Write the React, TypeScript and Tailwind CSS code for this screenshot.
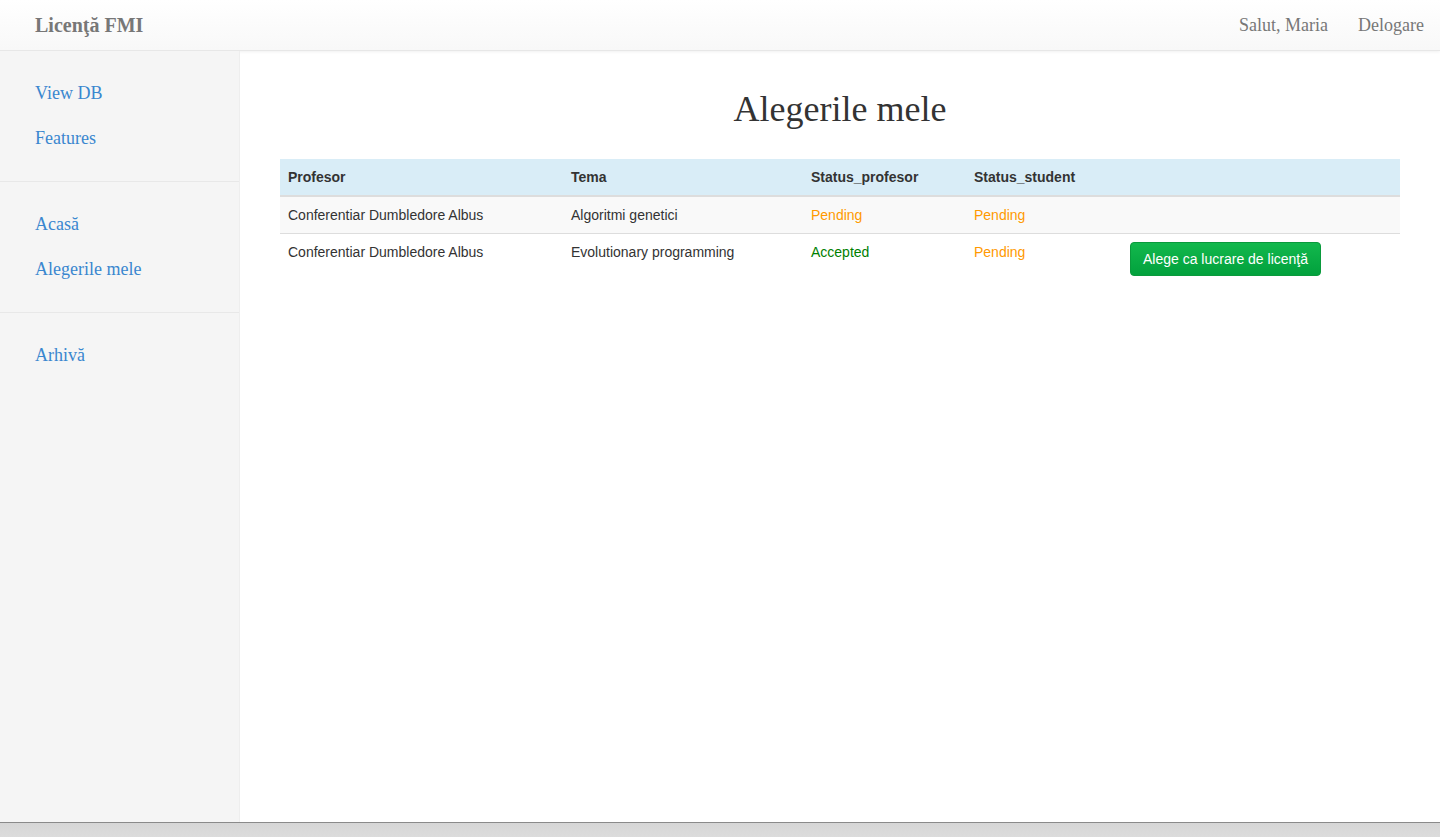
import React from "react";

type Row = {
  profesor: string;
  tema: string;
  statusProfesor: "Pending" | "Accepted";
  statusStudent: "Pending" | "Accepted";
  canChoose: boolean;
};

const rows: Row[] = [
  {
    profesor: "Conferentiar Dumbledore Albus",
    tema: "Algoritmi genetici",
    statusProfesor: "Pending",
    statusStudent: "Pending",
    canChoose: false,
  },
  {
    profesor: "Conferentiar Dumbledore Albus",
    tema: "Evolutionary programming",
    statusProfesor: "Accepted",
    statusStudent: "Pending",
    canChoose: true,
  },
];

const groups = [["View DB", "Features"], ["Acasă", "Alegerile mele"], ["Arhivă"]];

const Status = ({ value }: { value: string }) => (
  <span className={value === "Accepted" ? "text-[#008000]" : "text-[#ff9900]"}>{value}</span>
);

export default function App() {
  return (
    <div className="flex h-screen flex-col bg-white font-['Liberation_Serif',serif]">
      {/* top navbar */}
      <header className="flex h-[51px] shrink-0 items-center justify-between border-b border-[#e7e7e7] bg-gradient-to-b from-white to-[#f8f8f8] pl-[35px] pr-4 shadow-[0_1px_3px_rgba(0,0,0,0.06)]">
        <a className="text-[20px] font-bold text-[#777]">Licenţă FMI</a>
        <nav className="flex gap-[30px] text-[18px] text-[#777]">
          <a>Salut, Maria</a>
          <a>Delogare</a>
        </nav>
      </header>

      <div className="flex min-h-0 flex-1">
        {/* sidebar */}
        <aside className="w-[240px] shrink-0 border-r border-[#eee] bg-[#f5f5f5]">
          {groups.map((items, i) => (
            <ul key={i} className={"py-5 " + (i < groups.length - 1 ? "border-b border-[#e8e8e8]" : "")}>
              {items.map((item) => (
                <li key={item} className="flex h-[45px] items-center pl-[35px] text-[18px] text-[#3a87cf]">
                  <a>{item}</a>
                </li>
              ))}
            </ul>
          ))}
        </aside>

        {/* main */}
        <main className="flex-1 px-10">
          <h1 className="mt-[33px] mb-[25px] text-center text-[36px] leading-[50px] text-[#333]">
            Alegerile mele
          </h1>
          <table className="w-full border-collapse font-['Liberation_Sans',Arial,sans-serif] text-[14px] leading-5 text-[#333]">
            <thead>
              <tr className="bg-[#d9edf7] text-left">
                <th className="w-[283px] border-b-2 border-[#ddd] p-2 font-bold">Profesor</th>
                <th className="w-[240px] border-b-2 border-[#ddd] p-2 font-bold">Tema</th>
                <th className="w-[163px] border-b-2 border-[#ddd] p-2 font-bold">Status_profesor</th>
                <th className="w-[156px] border-b-2 border-[#ddd] p-2 font-bold">Status_student</th>
                <th className="border-b-2 border-[#ddd] p-2"></th>
              </tr>
            </thead>
            <tbody>
              {rows.map((r, i) => (
                <tr key={i} className={i % 2 === 0 ? "bg-[#f9f9f9]" : "bg-white"}>
                  <td className="border-t border-[#ddd] p-2 align-top">{r.profesor}</td>
                  <td className="border-t border-[#ddd] p-2 align-top">{r.tema}</td>
                  <td className="border-t border-[#ddd] p-2 align-top">
                    <Status value={r.statusProfesor} />
                  </td>
                  <td className="border-t border-[#ddd] p-2 align-top">
                    <Status value={r.statusStudent} />
                  </td>
                  <td className="border-t border-[#ddd] p-2 align-top">
                    {r.canChoose && (
                      <button className="h-[34px] rounded-[4px] border border-[#0a9a3c] bg-gradient-to-b from-[#12b84d] to-[#02a13d] px-3 text-[14px] text-white">
                        Alege ca lucrare de licenţă
                      </button>
                    )}
                  </td>
                </tr>
              ))}
            </tbody>
          </table>
        </main>
      </div>

      {/* bottom bar */}
      <div className="h-[15px] shrink-0 border-t border-[#8a8a8a] bg-gradient-to-b from-[#d6d6d6] to-[#dcdcdc]" />
    </div>
  );
}
